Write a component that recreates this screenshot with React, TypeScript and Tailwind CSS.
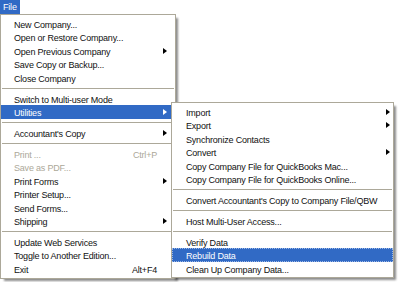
type Entry =
  | { sep: true }
  | { sep?: false; label: string; key?: string; sub?: boolean; off?: boolean; hot?: boolean }

const fileMenu: Entry[] = [
  { label: 'New Company...' },
  { label: 'Open or Restore Company...' },
  { label: 'Open Previous Company', sub: true },
  { label: 'Save Copy or Backup...' },
  { label: 'Close Company' },
  { sep: true },
  { label: 'Switch to Multi-user Mode' },
  { label: 'Utilities', sub: true, hot: true },
  { sep: true },
  { label: "Accountant's Copy", sub: true },
  { sep: true },
  { label: 'Print ...', key: 'Ctrl+P', off: true },
  { label: 'Save as PDF...', off: true },
  { label: 'Print Forms', sub: true },
  { label: 'Printer Setup...' },
  { label: 'Send Forms...' },
  { label: 'Shipping', sub: true },
  { sep: true },
  { label: 'Update Web Services' },
  { label: 'Toggle to Another Edition...' },
  { label: 'Exit', key: 'Alt+F4' },
]

const utilMenu: Entry[] = [
  { label: 'Import', sub: true },
  { label: 'Export', sub: true },
  { label: 'Synchronize Contacts' },
  { label: 'Convert', sub: true },
  { label: 'Copy Company File for QuickBooks Mac...' },
  { label: 'Copy Company File for QuickBooks Online...' },
  { sep: true },
  { label: "Convert Accountant's Copy to Company File/QBW" },
  { sep: true },
  { label: 'Host Multi-User Access...' },
  { sep: true },
  { label: 'Verify Data' },
  { label: 'Rebuild Data', hot: true },
  { label: 'Clean Up Company Data...' },
]

function Arrow({ light }: { light?: boolean }) {
  return (
    <span
      className={`h-0 w-0 border-y-[3.5px] border-l-[4px] border-y-transparent ${
        light ? 'border-l-white' : 'border-l-black'
      }`}
    />
  )
}

function MenuRows({ rows, pad, arrowGap, focus }: { rows: Entry[]; pad: string; arrowGap: string; focus?: boolean }) {
  return (
    <>
      {rows.map((r, i) =>
        r.sep ? (
          <div key={i} className="flex h-[7.25px] items-center px-px">
            <div className="h-px w-full bg-[#aca899]" />
          </div>
        ) : (
          <div
            key={i}
            className={`flex h-[13.5px] items-center pt-[3px] ${pad} ${
              r.hot ? 'bg-[#316ac5] text-white' : r.off ? 'text-[#aca899]' : 'text-[#111]'
            } ${r.hot && focus ? 'outline-1 -outline-offset-1 outline-dotted outline-[#9db8e6]' : ''}`}
          >
            <span className="whitespace-nowrap">{r.label}</span>
            {r.key && <span className="ml-auto mr-[18px]">{r.key}</span>}
            {r.sub && (
              <span className={`-mt-[3px] ml-auto flex ${arrowGap}`}>
                <Arrow light={r.hot} />
              </span>
            )}
          </div>
        ),
      )}
    </>
  )
}

export default function App() {
  return (
    <div className="relative h-[282px] w-[400px] overflow-hidden bg-white font-['Liberation_Sans',Arial,sans-serif] text-[9px] leading-none tracking-[-0.2px]">
      {/* menu bar */}
      <div className="flex h-[14px]">
        <div className="flex w-[20px] items-center bg-[#316ac5] pl-[3px] text-white">File</div>
      </div>

      {/* File menu */}
      <div className="w-[176px] border border-[#aca899] bg-white py-[2px] shadow-[3px_3px_2px_-1px_rgba(0,0,0,0.45)]">
        <MenuRows rows={fileMenu} pad="pl-[13px]" arrowGap="mr-[8px]" />
      </div>

      {/* Utilities submenu */}
      <div className="absolute left-[171px] top-[102px] w-[223px] border border-[#aca899] bg-white py-[2px] shadow-[3px_3px_2px_-1px_rgba(0,0,0,0.45)]">
        <MenuRows rows={utilMenu} pad="pl-[14px]" arrowGap="mr-[3px]" focus />
      </div>
    </div>
  )
}
